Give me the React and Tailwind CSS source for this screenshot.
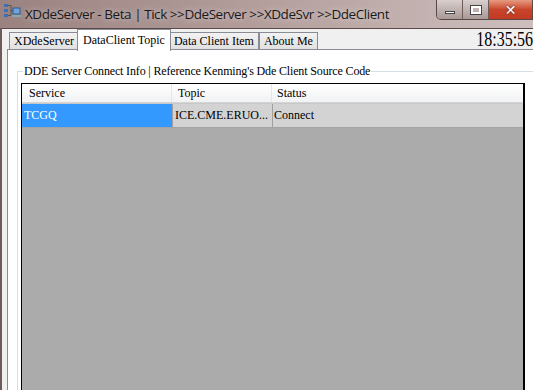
import React from "react";

const serif = { fontFamily: '"Liberation Serif", "Noto Sans CJK TC", serif' };

function AppIcon() {
  return (
    <svg width="18" height="16" viewBox="0 0 18 16">
      <rect x="1" y="1" width="4" height="3" fill="#3b6fb6" />
      <rect x="1" y="6" width="4" height="3" fill="#3b6fb6" />
      <rect x="1" y="11" width="4" height="3" fill="#3b6fb6" />
      <path d="M5 2.5H8V12.5H5M8 7.5H10" stroke="#555" strokeWidth="1" fill="none" />
      <rect x="10" y="5" width="7" height="6" fill="#6fa3dc" stroke="#2c5a94" strokeWidth="1" />
      <rect x="9" y="12" width="9" height="2" fill="#8aa" />
    </svg>
  );
}

function Tab({ label, active }) {
  if (active) {
    return (
      <div className="relative z-10 -mx-[2px] h-[22px] px-[5px] pt-[2px] bg-white border border-b-0 border-[#898c95] text-[12px] leading-[17px] text-black whitespace-nowrap">
        {label}
      </div>
    );
  }
  return (
    <div className="mt-[3px] h-[18px] px-[4px] border border-b-0 border-[#898c95] bg-gradient-to-b from-[#f2f2f2] to-[#e0e0e0] text-[12px] leading-[17px] text-black whitespace-nowrap">
      {label}
    </div>
  );
}

export default function App() {
  return (
    <div className="w-[533px] h-[390px] overflow-hidden flex flex-col bg-gradient-to-r from-[#9a8280] via-[#b49f9d] to-[#cdbfbe]">
      {/* Title bar */}
      <div className="h-[28px] flex shrink-0">
        <div className="pl-[3px] pt-[3px] shrink-0">
          <AppIcon />
        </div>
        <div
          className="pl-[4px] pt-[4px] text-[13.5px] leading-[20px] tracking-[-0.45px] text-[#1a1a1a] whitespace-nowrap min-w-0"
          style={{ fontFamily: '"Open Sans", "Noto Sans", sans-serif', textShadow: "0 0 6px rgba(255,255,255,0.6)" }}
        >
          XDdeServer - Beta | Tick &gt;&gt;DdeServer &gt;&gt;XDdeSvr &gt;&gt;DdeClient
        </div>
        <div className="ml-auto shrink-0 flex h-[20px] rounded-bl-[5px] overflow-hidden border border-t-0 border-[#5a4846]">
          <div className="w-[26px] flex items-center justify-center bg-gradient-to-b from-[#d8cfce] to-[#a99896] border-r border-[#6d5c5a]">
            <div className="w-[10px] h-[3px] mt-[5px] bg-white border border-[#444]" />
          </div>
          <div className="w-[26px] flex items-center justify-center bg-gradient-to-b from-[#d8cfce] to-[#a99896] border-r border-[#6d5c5a]">
            <div className="w-[10px] h-[8px] border-[2px] border-white outline outline-1 outline-[#444]" />
          </div>
          <div className="w-[43px] flex items-center justify-center bg-gradient-to-b from-[#e59a82] via-[#c8442a] to-[#c23a22]">
            <span className="text-white font-bold text-[14px] leading-none" style={{ fontFamily: '"DejaVu Sans", sans-serif', textShadow: "0 0 2px #333" }}>
              ✕
            </span>
          </div>
        </div>
      </div>

      {/* Client area */}
      <div className="flex-1 flex min-h-0">
        <div className="w-[2px] bg-[#6e5a58] shrink-0" />
        <div className="flex-1 flex flex-col bg-[#f0f0f0] border-t border-[#5a4a48] min-h-0 pl-[5px]" style={serif}>
          {/* Tab strip */}
          <div className="h-[21px] flex items-start shrink-0 pl-[2px]">
            <Tab label="XDdeServer" />
            <Tab label="DataClient Topic" active />
            <Tab label="Data Client Item" />
            <Tab label="About Me" />
            <div className="ml-auto text-[20px] leading-[21px] text-black origin-right scale-x-[0.8] whitespace-nowrap">18:35:56</div>
          </div>
          {/* Tab page */}
          <div className="flex-1 bg-white border-l border-t border-[#898c95] -mt-px pl-[9px] pt-[13px] min-h-0 flex flex-col">
            <div className="flex-1 flex flex-col border-l border-t border-[#d5dfe5] mt-[8px] min-h-0">
              <div className="-mt-[9px] ml-[5px] self-start bg-white px-[1px] text-[12px] leading-[16px] tracking-[-0.15px] text-black whitespace-nowrap">
                DDE Server Connect Info | Reference Kenming's Dde Client Source Code
              </div>
              <div className="flex-1 ml-[3px] mt-[4px] w-[504px] border border-black border-r-2 border-b-0 bg-[#ababab] flex flex-col min-h-0">
                {/* Header */}
                <div className="h-[19px] flex bg-gradient-to-b from-white to-[#f1f2f4] border-b border-[#d5d5d5] text-[12px] leading-[18px] text-black">
                  <div className="w-[150px] pl-[7px] border-r border-[#e3e5e8]">Service</div>
                  <div className="w-[100px] pl-[6px] border-r border-[#e3e5e8]">Topic</div>
                  <div className="flex-1 pl-[5px]">Status</div>
                </div>
                {/* Row */}
                <div className="h-[25px] flex border-t border-[#c8c8c8] border-b border-b-[#a3a3a3] text-[12px] leading-[23px]">
                  <div className="w-[150px] pl-[2px] bg-[#3399ff] text-white">TCGQ</div>
                  <div className="w-[100px] pl-[2px] bg-[#d3d3d3] border-l border-[#a0a0a0] text-black whitespace-nowrap overflow-hidden">
                    ICE.CME.ERUO...
                  </div>
                  <div className="flex-1 pl-[1px] bg-[#d3d3d3] border-l border-[#a0a0a0] text-black">Connect</div>
                </div>
                <div className="flex-1" />
              </div>
            </div>
          </div>
        </div>
      </div>
    </div>
  );
}
